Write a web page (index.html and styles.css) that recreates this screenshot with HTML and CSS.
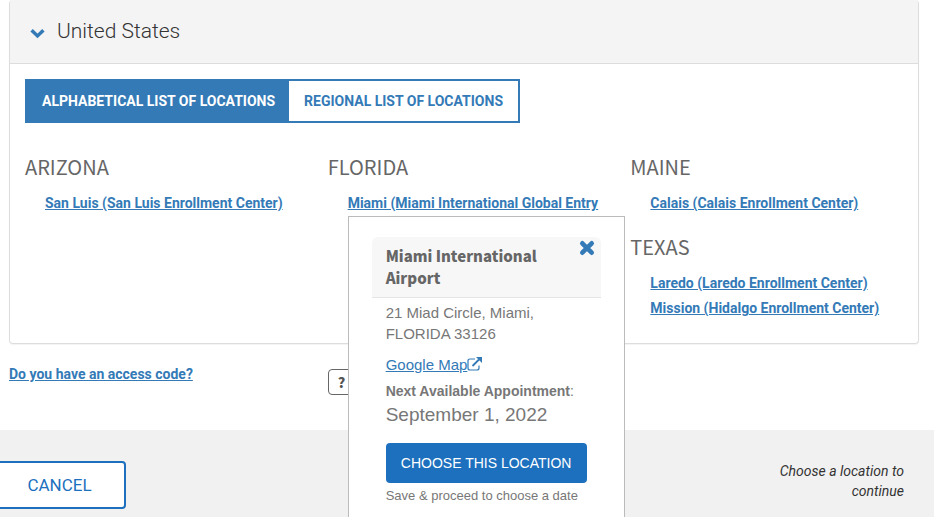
FILE: index.html
```html
<!DOCTYPE html>
<html lang="en">
<head>
    <meta charset="UTF-8">
    <meta name="viewport" content="width=device-width, initial-scale=1.0">
    <title>Choose a Location</title>
    <link rel="stylesheet" href="styles.css">
</head>
<body>
    <main>
        <section class="panel">
            <h2 class="panel-heading">
                <button class="panel-toggle" aria-expanded="true">
                    <svg class="chevron" viewBox="0 0 14 10" aria-hidden="true"><path d="M1.5 2 L7 7.3 L12.500 2" fill="none" stroke="#337ab7" stroke-width="3.200"/></svg>
                    United States
                </button>
            </h2>
            <div class="panel-body">
                <div class="tabs">
                    <button class="tab active">ALPHABETICAL LIST OF LOCATIONS</button>
                    <button class="tab">REGIONAL LIST OF LOCATIONS</button>
                </div>
                <div class="states">
                    <div class="column">
                        <h3>ARIZONA</h3>
                        <ul>
                            <li><a href="#">San Luis (San Luis Enrollment Center)</a></li>
                        </ul>
                    </div>
                    <div class="column">
                        <h3>FLORIDA</h3>
                        <ul>
                            <li>
                                <a href="#">Miami (Miami International Global Entry</a>
                                <div class="popup">
                                    <div class="popup-header">
                                        <h4>Miami International Airport</h4>
                                        <button class="close-btn" aria-label="Close">
                                            <svg viewBox="0 0 16 16" aria-hidden="true"><path d="M3.300 3.300 L12.700 12.700 M12.700 3.300 L3.300 12.700" stroke="#337ab7" stroke-width="4.600" stroke-linecap="round"/></svg>
                                        </button>
                                    </div>
                                    <div class="popup-body">
                                        <p class="address">21 Miad Circle, Miami,<br>FLORIDA 33126</p>
                                        <a class="map-link" href="#">Google Map<svg viewBox="0 0 15 14" aria-hidden="true"><path d="M8 2 H3 Q1 2 1 4 V11 Q1 13 3 13 H10 Q12 13 12 11 V8.500" fill="none" stroke="#337ab7" stroke-width="1.200"/><path d="M5.500 9 L12 2.500" stroke="#337ab7" stroke-width="1.800"/><path d="M9 0 H15 V6 Z" fill="#337ab7"/></svg></a>
                                        <p class="next"><strong>Next Available Appointment</strong>:</p>
                                        <p class="date">September 1, 2022</p>
                                        <button class="choose-btn">CHOOSE THIS LOCATION</button>
                                        <p class="note">Save &amp; proceed to choose a date</p>
                                    </div>
                                </div>
                            </li>
                        </ul>
                    </div>
                    <div class="column">
                        <h3>MAINE</h3>
                        <ul>
                            <li><a href="#">Calais (Calais Enrollment Center)</a></li>
                        </ul>
                        <h3>TEXAS</h3>
                        <ul>
                            <li><a href="#">Laredo (Laredo Enrollment Center)</a></li>
                            <li><a href="#">Mission (Hidalgo Enrollment Center)</a></li>
                        </ul>
                    </div>
                </div>
            </div>
        </section>
        <div class="access">
            <a href="#">Do you have an access code?</a>
            <button class="help-btn" aria-label="Help">?</button>
        </div>
    </main>
    <footer>
        <button class="cancel-btn">CANCEL</button>
        <p class="hint">Choose a location to continue</p>
    </footer>
</body>
</html>
```
FILE: styles.css
```css
* {
    box-sizing: border-box;
}
body {
    margin: 0;
    height: 100vh;
    display: flex;
    flex-direction: column;
    overflow: hidden;
    background-color: #fff;
    color: #333;
    font-family: Roboto, sans-serif;
    font-size: 14px;
}
h2, h3, h4, p, ul {
    margin: 0;
    padding: 0;
}
ul {
    list-style: none;
}
button {
    font-family: inherit;
    cursor: pointer;
}
a {
    color: #337ab7;
    font-weight: bold;
    text-decoration: underline;
}
main {
    padding: 0 15px 0 9px;
}
.panel {
    border: 1px solid #ddd;
    border-top: none;
    border-radius: 4px;
    box-shadow: 0 1px 1px rgba(0, 0, 0, 0.05);
}
.panel-heading {
    background-color: #f4f4f4;
    border-bottom: 1px solid #ddd;
    border-radius: 4px 4px 0 0;
}
.panel-toggle {
    display: flex;
    align-items: center;
    gap: 12px;
    width: 100%;
    height: 63px;
    padding: 0 20px 2px;
    border: none;
    background: none;
    color: #333;
    font-size: 21px;
    font-weight: 300;
}
.chevron {
    width: 15px;
    height: 11px;
    margin-top: 6px;
}
.panel-body {
    padding: 15px 15px 5px;
}
.tabs {
    display: flex;
}
.tab {
    height: 44px;
    padding: 0 15px;
    border: 2px solid #337ab7;
    background-color: #fff;
    color: #337ab7;
    font-size: 14px;
    font-weight: bold;
}
.tab.active {
    padding-right: 14px;
    background-color: #337ab7;
    color: #fff;
    border-right: none;
}
.tab + .tab {
    border-left: none;
}
.states {
    display: grid;
    grid-template-columns: repeat(3, 1fr);
    gap: 30px;
    padding-top: 30px;
}
.column h3 {
    color: #666;
    font-family: "Noto Sans CJK JP", sans-serif;
    font-size: 20px;
    font-weight: normal;
    line-height: 28px;
    margin-bottom: 10px;
}
.column ul {
    padding-left: 20px;
    margin-bottom: 17px;
}
.column li {
    position: relative;
    line-height: 25px;
    white-space: nowrap;
}
.popup {
    position: absolute;
    top: 25px;
    left: 0;
    width: 277px;
    height: 320px;
    padding: 20px 23px;
    border: 1px solid #bbb;
    background-color: #fff;
    color: #777;
    font-family: "Liberation Sans", Arial, sans-serif;
    white-space: normal;
}
.popup-header {
    display: flex;
    align-items: flex-start;
    justify-content: space-between;
    padding: 8px 6px 8px 14px;
    border-bottom: 1px solid #e5e5e5;
    border-radius: 6px 6px 0 0;
    background-color: #f7f7f7;
}
.popup-header h4 {
    max-width: 170px;
    color: #666;
    font-family: "Noto Sans CJK JP", sans-serif;
    font-size: 15px;
    font-weight: 900;
    line-height: 22px;
}
.close-btn {
    display: flex;
    margin-top: -5px;
    padding: 0;
    border: none;
    background: none;
}
.close-btn svg {
    width: 16px;
    height: 16px;
}
.popup-body {
    padding: 4px 14px;
}
.address {
    font-size: 15px;
    line-height: 21px;
    margin-bottom: 10px;
}
.map-link {
    display: flex;
    align-items: center;
    font-size: 15px;
    font-weight: normal;
    line-height: 21px;
}
.map-link svg {
    width: 15px;
    height: 14px;
    margin-bottom: 2px;
}
.next {
    margin-top: 6px;
    font-size: 14px;
    line-height: 21px;
}
.date {
    font-size: 19px;
    line-height: 26px;
}
.choose-btn {
    width: 100%;
    height: 40px;
    margin-top: 15px;
    padding: 0;
    border: none;
    border-radius: 4px;
    background-color: #1c70be;
    color: #fff;
    font-size: 14px;
    white-space: nowrap;
}
.note {
    margin-top: 3px;
    font-size: 13px;
    line-height: 20px;
}
.access {
    display: grid;
    grid-template-columns: 35% 1fr;
    align-items: start;
    padding-top: 25px;
    line-height: 10px;
}
.help-btn {
    justify-self: start;
    width: 28px;
    height: 26px;
    padding: 0;
    border: 1px solid #666;
    border-radius: 4px;
    background-color: #fff;
    color: #555;
    font-family: "Noto Sans CJK JP", sans-serif;
    font-size: 14px;
    font-weight: 900;
}
footer {
    flex: 1;
    display: flex;
    align-items: flex-start;
    justify-content: space-between;
    margin-top: 35px;
    padding: 31px 30px 0 0;
    background-color: #f1f1f1;
}
.cancel-btn {
    width: 133px;
    height: 48px;
    margin-left: -7px;
    border: 2px solid #1c70be;
    border-radius: 4px;
    background-color: #fff;
    color: #1c70be;
    font-size: 17px;
}
.hint {
    width: 140px;
    font-style: italic;
    line-height: 20px;
    text-align: right;
}
```
